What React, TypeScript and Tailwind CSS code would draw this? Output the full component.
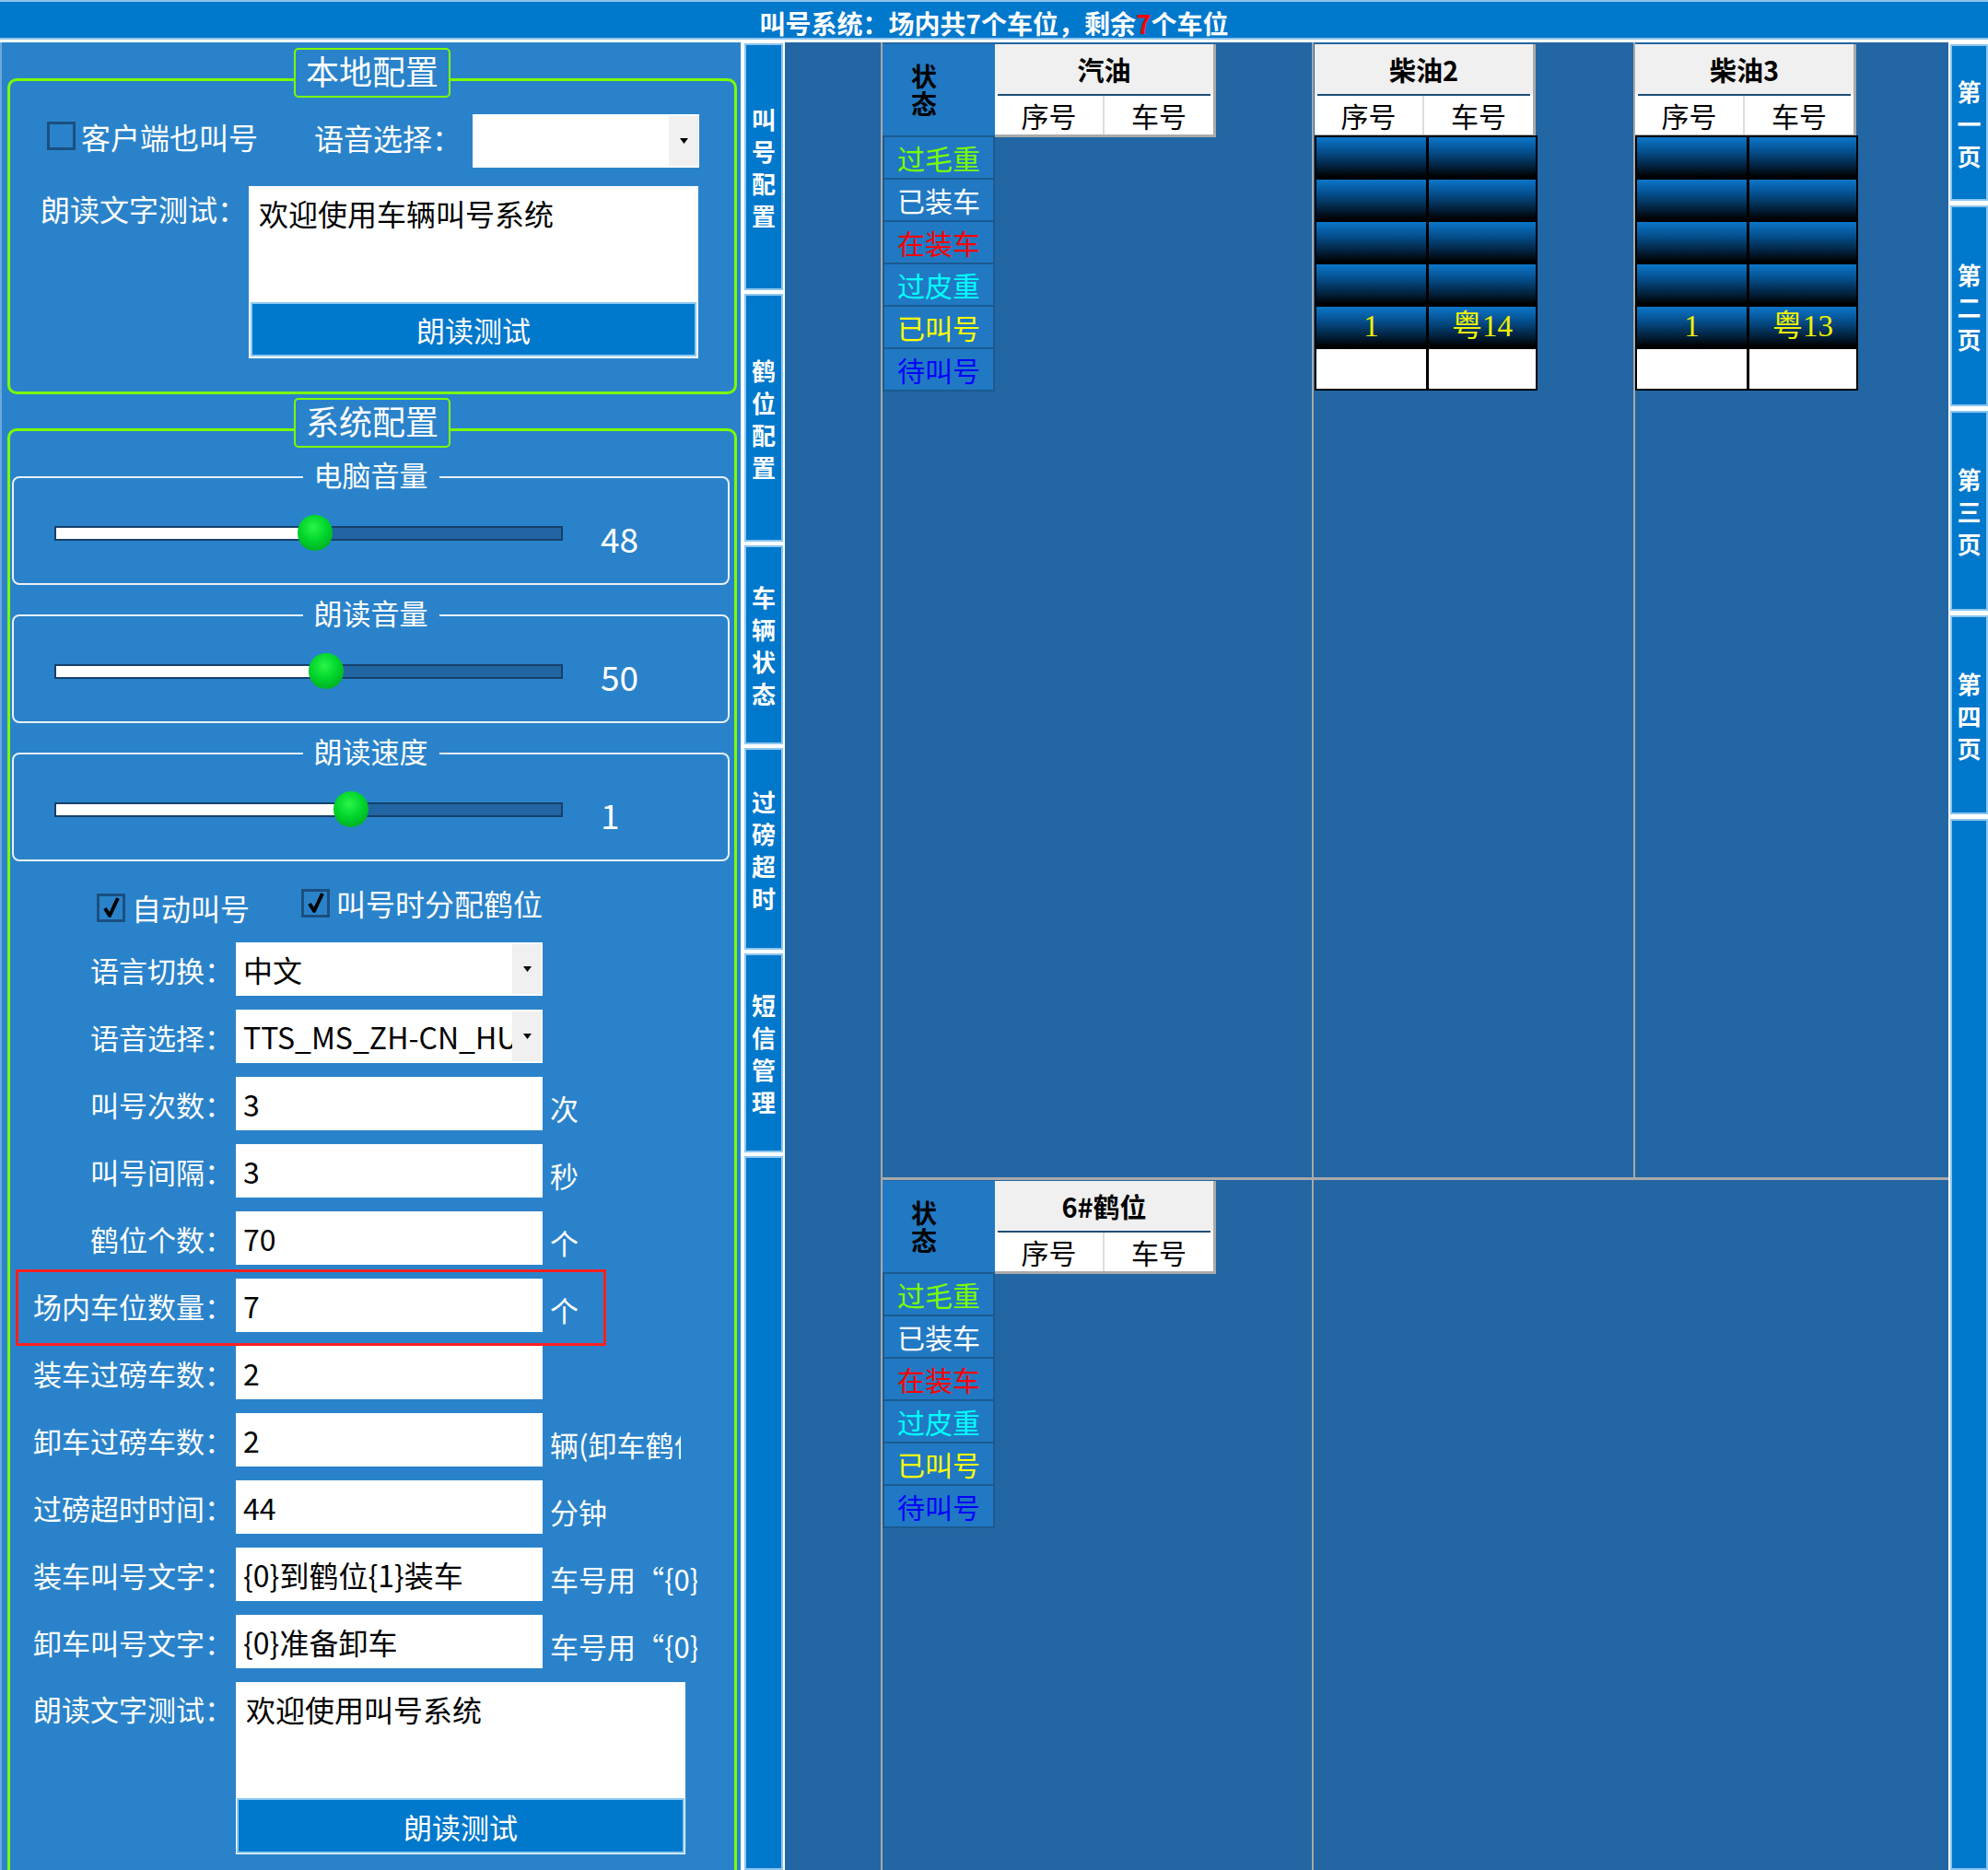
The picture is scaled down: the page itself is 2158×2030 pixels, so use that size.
import React from "react";

// 状态列
const states = [
  { name: "过毛重", color: "text-[#7cfc00]" },
  { name: "已装车", color: "text-white" },
  { name: "在装车", color: "text-[#ff0000]" },
  { name: "过皮重", color: "text-[#00ffff]" },
  { name: "已叫号", color: "text-[#ffff00]" },
  { name: "待叫号", color: "text-[#0000ff]" },
];

const leftTabs = [
  { name: "叫号配置", h: "h-[268px]" },
  { name: "鹤位配置", h: "h-[269px]" },
  { name: "车辆状态", h: "h-[216px]" },
  { name: "过磅超时", h: "h-[219px]" },
  { name: "短信管理", h: "h-[216px]" },
];

const pageTabs = [
  { name: "第一页", h: "h-[170px]" },
  { name: "第二页", h: "h-[218px]" },
  { name: "第三页", h: "h-[217px]" },
  { name: "第四页", h: "h-[216px]" },
];

const craneRows = (plate: string) => [
  ["", ""],
  ["", ""],
  ["", ""],
  ["", ""],
  ["1", plate],
  [null, null],
];

function VText({ text, className }: { text: string; className: string }) {
  return (
    <div className={"flex flex-col items-center " + className}>
      {[...text].map((c, i) => (
        <span key={i}>{c}</span>
      ))}
    </div>
  );
}

function Tab({ name, h }: { name: string; h: string }) {
  return (
    <div className={`${h} flex shrink-0 items-center justify-center border-2 border-[#8cc6ee] bg-[#0078cc]`}>
      <VText text={name} className="text-[26px] font-bold leading-[35px] text-white" />
    </div>
  );
}

function Arrow() {
  return (
    <svg width="9" height="6" viewBox="0 0 9 6">
      <polygon points="0,0 9,0 4.5,6" fill="#000" />
    </svg>
  );
}

function Combo({ text, w }: { text: string; w: string }) {
  return (
    <div className={`${w} flex h-[58px] shrink-0 bg-white`}>
      <div className="flex-1 overflow-hidden whitespace-nowrap pl-[8px] text-[32px] leading-[58px] text-black">{text}</div>
      <div className="my-[2px] mr-[1px] flex w-[32px] items-center justify-center bg-[#f0f0f0]">
        <Arrow />
      </div>
    </div>
  );
}

function Box({ checked, className }: { checked?: boolean; className?: string }) {
  return (
    <div className={"flex h-[31px] w-[31px] shrink-0 items-center justify-center border-[3px] border-[#1b4f80] " + (className ?? "")}>
      {checked && (
        <svg width="20" height="24" viewBox="0 0 20 24">
          <path d="M3 13 L8 21 L17 2" stroke="#000" strokeWidth="4" fill="none" strokeLinejoin="round" />
        </svg>
      )}
    </div>
  );
}

function Slider({ title, value, thumb }: { title: string; value: string; thumb: number }) {
  return (
    <div className="ml-[2px] mr-[5px]">
      <div className="relative z-10 mx-auto h-[30px] w-fit bg-[#2a83ca] px-[12px] pb-[4px] text-[31px] leading-[26px] text-white">
        {title}
      </div>
      <div className="-mt-[15px] h-[118px] rounded-[8px] border-2 border-[#e8f0f8]">
        <div className="mt-[40px] flex h-[39px] items-center">
          <div className="relative ml-[44px] h-[16px] w-[552px] border-2 border-[#16406a] bg-[#2166a3]">
            <div className="h-full bg-white" style={{ width: thumb + 19 }} />
            <div
              className="absolute top-[-13.5px] h-[39px] w-[38px] rounded-full bg-[radial-gradient(circle_at_45%_35%,#2af548_0%,#00d42b_45%,#009a1e_100%)]"
              style={{ left: thumb }}
            />
          </div>
          <span className="ml-[41px] mt-[12px] text-[37px] leading-none text-white">{value}</span>
        </div>
      </div>
    </div>
  );
}

function FieldRow({ label, value, unit, unitW, labelW = "w-[242px]" }: { label: string; value: string; unit?: string; unitW?: string; labelW?: string }) {
  return (
    <div className="flex h-[58px] shrink-0 items-center">
      <span className={`${labelW} shrink-0 text-right text-[31px] leading-none text-white`}>{label}</span>
      <div className="ml-[3px] flex h-[58px] w-[333px] shrink-0 items-center overflow-hidden whitespace-nowrap bg-white pl-[8px] text-[32px] leading-none text-black">
        {value}
      </div>
      {unit && (
        <span className={`${unitW ? unitW + " overflow-hidden" : ""} ml-[8px] mt-[10px] whitespace-nowrap text-[31px] leading-[1.3] text-white`}>{unit}</span>
      )}
    </div>
  );
}

function LeftPanel() {
  return (
    <div className="w-[804px] shrink-0 overflow-hidden border-l-2 border-[#6aa8dc] bg-[#2a83ca] text-white">
      {/* 本地配置 */}
      <div className="ml-[6px] mt-[6px] w-[792px]">
        <div className="relative z-10 mx-auto flex h-[54px] w-[170px] items-center justify-center rounded-[5px] border-2 border-[#7cfc00] bg-[#2a83ca] pb-[6px] text-[36px] leading-none">
          本地配置
        </div>
        <div className="-mt-[21px] h-[343px] rounded-[10px] border-[3px] border-[#7cfc00]">
          <div className="mt-[36px] flex h-[58px] items-center">
            <Box className="mb-[12px] ml-[40px] h-[30px] w-[30px]" />
            <span className="mb-[11px] ml-[6px] w-[201px] shrink-0 text-[32px] leading-none">客户端也叫号</span>
            <span className="mb-[8px] w-[212px] shrink-0 text-right text-[32px] leading-none">语音选择：</span>
            <div className="ml-[12px]">
              <Combo text="" w="w-[246px]" />
            </div>
          </div>
          <div className="mt-[20px] flex items-start">
            <span className="mt-[8px] w-[257px] shrink-0 text-right text-[32px] leading-none">朗读文字测试：</span>
            <div className="ml-[2px] flex h-[187px] w-[488px] flex-col justify-between bg-white">
              <div className="pl-[11px] pt-[13px] text-[32px] leading-none text-black">欢迎使用车辆叫号系统</div>
              <div className="mx-[2px] mb-[2px] flex h-[59px] items-center justify-center border-2 border-[#8ccaf2] bg-[#0078cc] text-[31px] leading-none text-white">
                朗读测试
              </div>
            </div>
          </div>
        </div>
      </div>

      {/* 系统配置 */}
      <div className="ml-[6px] mt-[4px] w-[792px]">
        <div className="relative z-10 mx-auto flex h-[54px] w-[170px] items-center justify-center rounded-[5px] border-2 border-[#7cfc00] bg-[#2a83ca] pb-[6px] text-[36px] leading-none">
          系统配置
        </div>
        <div className="-mt-[21px] h-[1600px] rounded-[10px] border-[3px] border-[#7cfc00]">
          <div className="mt-[34px] flex flex-col gap-[17px]">
            <Slider title="电脑音量" value="48" thumb={262} />
            <Slider title="朗读音量" value="50" thumb={274} />
            <Slider title="朗读速度" value="1" thumb={301} />
          </div>

          <div className="mt-[29px] flex h-[35px] items-start">
            <div className="ml-[94px] mt-[5px] flex w-[222px] shrink-0 items-center">
              <Box checked />
              <span className="ml-[7px] text-[32px] leading-none">自动叫号</span>
            </div>
            <div className="flex items-center">
              <Box checked />
              <span className="ml-[7px] text-[32px] leading-none">叫号时分配鹤位</span>
            </div>
          </div>

          <div className="mt-[24px] flex flex-col gap-[15px]">
            <div className="flex h-[58px] items-center">
              <span className="w-[242px] text-right text-[31px] leading-none">语言切换：</span>
              <div className="ml-[3px]">
                <Combo text="中文" w="w-[333px]" />
              </div>
            </div>
            <div className="flex h-[58px] items-center">
              <span className="w-[242px] text-right text-[31px] leading-none">语音选择：</span>
              <div className="ml-[3px]">
                <Combo text="TTS_MS_ZH-CN_HUIHUI_11.0" w="w-[333px]" />
              </div>
            </div>
            <FieldRow label="叫号次数：" value="3" unit="次" />
            <FieldRow label="叫号间隔：" value="3" unit="秒" />
            <FieldRow label="鹤位个数：" value="70" unit="个" />
            <div className="-mb-[15px] -mt-[10px] ml-[6px] w-[641px] border-[3px] border-[#ff1f1f] pb-[12px] pt-[7px]">
              <FieldRow label="场内车位数量：" value="7" unit="个" labelW="w-[233px]" />
            </div>
            <FieldRow label="装车过磅车数：" value="2" />
            <FieldRow label="卸车过磅车数：" value="2" unit="辆(卸车鹤位数量)" unitW="w-[142px]" />
            <FieldRow label="过磅超时时间：" value="44" unit="分钟" />
            <FieldRow label="装车叫号文字：" value="{0}到鹤位{1}装车" unit="车号用“{0}”代替" unitW="w-[160px]" />
            <FieldRow label="卸车叫号文字：" value="{0}准备卸车" unit="车号用“{0}”代替" unitW="w-[160px]" />
            <div className="flex items-start">
              <span className="mt-[13px] w-[242px] shrink-0 text-right text-[31px] leading-none">朗读文字测试：</span>
              <div className="ml-[3px] flex h-[187px] w-[488px] flex-col justify-between bg-white">
                <div className="pl-[11px] pt-[13px] text-[32px] leading-none text-black">欢迎使用叫号系统</div>
                <div className="mx-[1px] mb-[1px] flex h-[60px] items-center justify-center border-2 border-[#8ccaf2] bg-[#0078cc] text-[31px] leading-none text-white">
                  朗读测试
                </div>
              </div>
            </div>
          </div>
        </div>
      </div>
    </div>
  );
}

function StatusCol() {
  return (
    <div className="w-[122px] shrink-0">
      <div className="flex h-[99px] items-center bg-[#2179c3] pl-[31px]">
        <div className="flex flex-col items-center text-[28px] font-bold leading-none text-black">
          <span className="block h-[30px]">状</span>
          <span className="block h-[30px]">态</span>
        </div>
      </div>
      <div className="border-x-2 border-b-2 border-[#1b5a90] bg-[#2179c3]">
        {states.map((s) => (
          <div key={s.name} className={`flex h-[46px] items-center justify-center border-t-2 border-[#1b5a90] text-[30px] leading-none ${s.color}`}>
            {s.name}
          </div>
        ))}
      </div>
    </div>
  );
}

function TableHead({ name }: { name: string }) {
  return (
    <div className="w-[240px] border-b-[3px] border-r-[3px] border-[#a9a9a9] bg-white">
      <div className="flex h-[54px] items-center justify-center bg-[#f0f0f0] text-[29px] font-bold leading-none text-black">{name}</div>
      <div className="mx-[3px] h-[2px] bg-[#1f4e79]" />
      <div className="flex h-[42px] text-[30px] leading-none text-black">
        <div className="flex w-[119px] items-center justify-center border-r-2 border-[#dcdcdc]">序号</div>
        <div className="flex flex-1 items-center justify-center">车号</div>
      </div>
    </div>
  );
}

function DataGrid({ rows }: { rows: (string | null)[][] }) {
  return (
    <div className="-mt-[2px] flex w-[242px] flex-col gap-[3px] bg-black p-[2px]">
      {rows.map((r, i) => (
        <div key={i} className="flex h-[43px] gap-[3px]">
          {r.map((c, j) => (
            <div
              key={j}
              className={`${j === 0 ? "w-[119px]" : "flex-1"} flex items-center justify-center font-['Liberation_Serif','Noto_Sans_CJK_SC',serif] text-[33px] leading-none text-[#f2f200] ${
                c === null ? "bg-white" : "bg-[linear-gradient(180deg,#0b76c9_0%,#05508f_35%,#02203a_75%,#000_100%)]"
              }`}
            >
              {c}
            </div>
          ))}
        </div>
      ))}
    </div>
  );
}

function Board() {
  return (
    <div className="flex min-w-0 flex-1 bg-[#2266a3]">
      <div className="w-[104px] shrink-0" />
      <div className="w-[2px] shrink-0 bg-[#a9a9a9]" />
      <div className="flex min-w-0 flex-1 flex-col">
        <div className="flex h-[1232px] shrink-0">
          <div className="w-[466px] shrink-0 pt-[2px]">
            <div className="flex">
              <StatusCol />
              <div>
                <TableHead name="汽油" />
              </div>
            </div>
          </div>
          <div className="w-[2px] shrink-0 bg-[#a9a9a9]" />
          <div className="w-[347px] shrink-0 pl-[1px] pt-[2px]">
            <TableHead name="柴油2" />
            <DataGrid rows={craneRows("粤14")} />
          </div>
          <div className="w-[2px] shrink-0 bg-[#a9a9a9]" />
          <div className="flex-1 pt-[2px]">
            <TableHead name="柴油3" />
            <DataGrid rows={craneRows("粤13")} />
          </div>
        </div>
        <div className="h-[3px] shrink-0 bg-[#a9a9a9]" />
        <div className="flex flex-1">
          <div className="w-[466px] shrink-0 pt-[1px]">
            <div className="flex">
              <StatusCol />
              <div>
                <TableHead name="6#鹤位" />
              </div>
            </div>
          </div>
          <div className="w-[2px] shrink-0 bg-[#a9a9a9]" />
          <div className="flex-1" />
        </div>
      </div>
    </div>
  );
}

export default function App() {
  return (
    <div className="flex h-[2030px] w-[2158px] flex-col overflow-hidden bg-white font-['Noto_Sans_CJK_SC','Noto_Sans',sans-serif]">
      <div className="h-[2px] shrink-0 bg-[#8ec4ec]" />
      <div className="flex h-[39px] shrink-0 items-center justify-center bg-[#0078cc] pt-[6px] text-[28px] font-bold leading-none text-white">
        <span>
          叫号系统：场内共7个车位，剩余<span className="text-[#ff0000]">7</span>个车位
        </span>
      </div>
      <div className="h-[2px] shrink-0 bg-[#8ec4ec]" />
      <div className="h-[3px] shrink-0 bg-white" />

      <div className="flex min-h-0 flex-1">
        <LeftPanel />
        <div className="flex w-[48px] shrink-0 flex-col gap-[4px] bg-white pl-[4px] pr-[2px] pt-[1px]">
          {leftTabs.map((t) => (
            <Tab key={t.name} name={t.name} h={t.h} />
          ))}
          <div className="flex-1 border-2 border-[#8cc6ee] bg-[#0078cc]" />
        </div>
        <Board />
        <div className="flex w-[43px] shrink-0 flex-col gap-[5px] bg-white pl-[2px] pt-[2px]">
          {pageTabs.map((t) => (
            <Tab key={t.name} name={t.name} h={t.h} />
          ))}
          <div className="flex-1 border-2 border-[#8cc6ee] bg-[#0078cc]" />
        </div>
      </div>
    </div>
  );
}
